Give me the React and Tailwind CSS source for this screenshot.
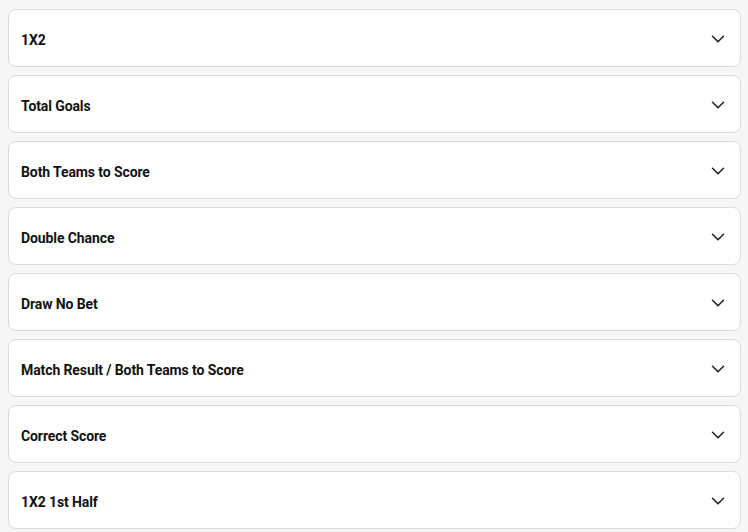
import { ChevronDown } from 'lucide-react';

const markets = [
  '1X2',
  'Total Goals',
  'Both Teams to Score',
  'Double Chance',
  'Draw No Bet',
  'Match Result / Both Teams to Score',
  'Correct Score',
  '1X2 1st Half',
];

const App = () => {
  return (
    <div className="min-h-screen w-full bg-[#f6f6f6] px-2 pt-[9px]" style={{ fontFamily: 'Roboto, sans-serif' }}>
      <div className="flex flex-col gap-2 w-[733px]">
        {markets.map((m) => (
          <div
            key={m}
            className="h-[58px] bg-white border border-[#dcdcdc] rounded-lg flex items-center justify-between pl-3 pr-[11px]"
          >
            <span className="text-[14px] font-bold text-[#111] tracking-[-0.1px] mt-[5px]">{m}</span>
            <ChevronDown size={22} strokeWidth={1.7} className="text-[#222] mt-px" />
          </div>
        ))}
      </div>
    </div>
  );
};

export default App;
